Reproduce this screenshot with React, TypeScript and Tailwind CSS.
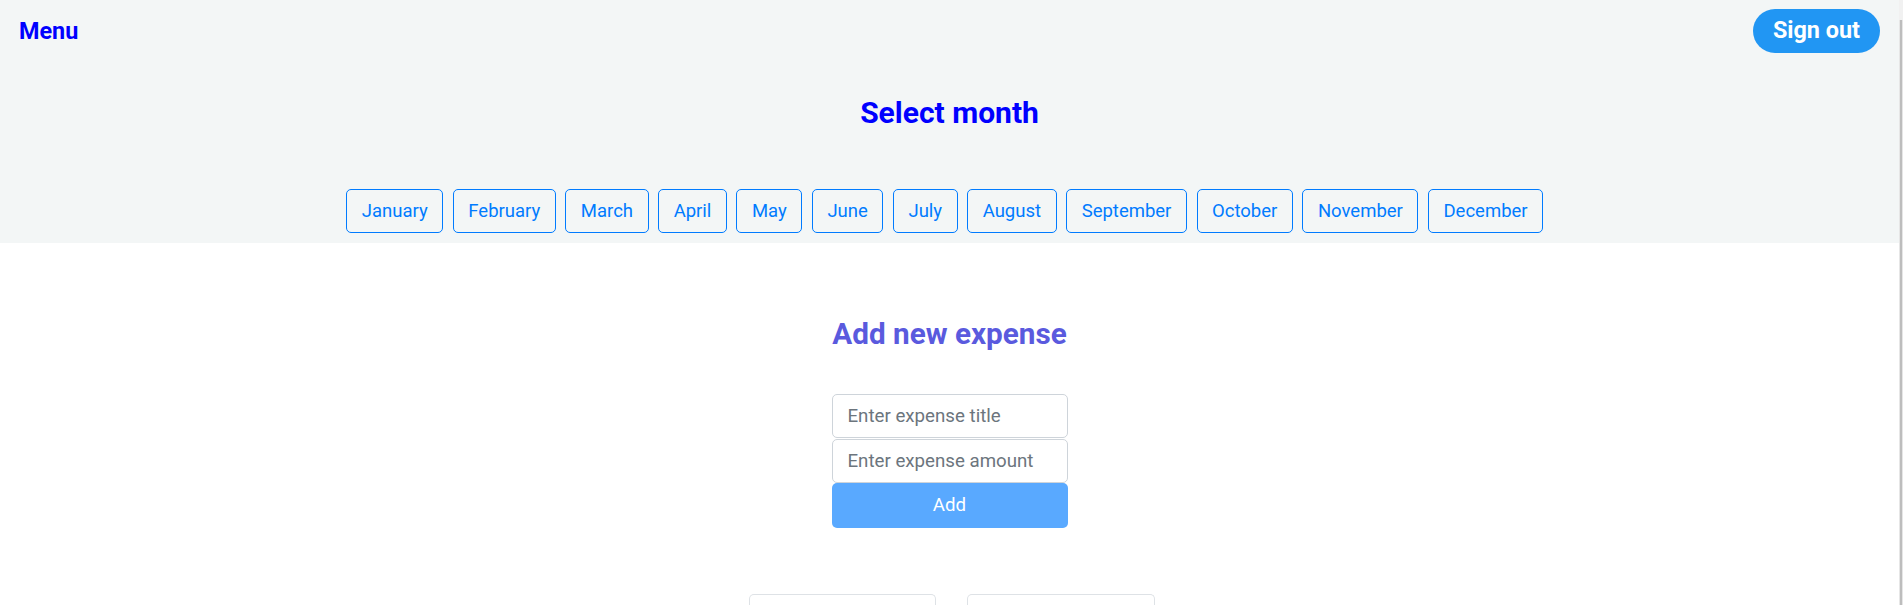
import React from "react";

const months = [
  "January",
  "February",
  "March",
  "April",
  "May",
  "June",
  "July",
  "August",
  "September",
  "October",
  "November",
  "December",
];

function Header() {
  return (
    <header className="bg-[#f3f6f6] pb-[10px]">
      <div className="flex items-center justify-between px-[19px] pt-[9px]">
        <button className="text-[23.4px] font-bold leading-[30px] text-[#0000ff]">
          Menu
        </button>
        <button className="h-[44px] rounded-full bg-[#2196f3] px-[20px] text-[23.4px] font-bold text-white">
          Sign out
        </button>
      </div>
      <h2 className="mt-[42px] text-center text-[30px] font-bold leading-[36px] text-[#0000ff]">
        Select month
      </h2>
      <div className="mt-[58px] flex justify-center">
        {months.map((month) => (
          <button
            key={month}
            className="mr-[9.6px] h-[44px] rounded-[5px] border border-[#007bff] px-[14.5px] text-[18.5px] leading-[28px] text-[#007bff]"
          >
            {month}
          </button>
        ))}
      </div>
    </header>
  );
}

function ExpenseForm() {
  return (
    <section className="flex flex-col items-center">
      <h2 className="mt-[73px] text-[29.7px] font-bold leading-[36px] text-[#5a5ade]">
        Add new expense
      </h2>
      <form className="mt-[42px] flex w-[236px] flex-col">
        <input
          type="text"
          placeholder="Enter expense title"
          className="h-[44px] rounded-[5px] border border-[#ced4da] bg-white px-[15px] text-[18.7px] text-[#495057] outline-none placeholder:text-[#6c757d]"
        />
        <input
          type="number"
          placeholder="Enter expense amount"
          className="mt-px h-[44px] rounded-[5px] border border-[#ced4da] bg-white px-[15px] text-[18.7px] text-[#495057] outline-none placeholder:text-[#6c757d]"
        />
        <button
          type="button"
          disabled
          className="h-[45px] rounded-[5px] bg-[#59a9ff] text-[18.7px] text-white"
        >
          Add
        </button>
      </form>
      <div className="ml-[4px] mt-[66px] flex gap-[31px]">
        <div className="h-[30px] w-[187px] rounded-t-[5px] border border-b-0 border-[#dee2e6]" />
        <div className="h-[30px] w-[188px] rounded-t-[5px] border border-b-0 border-[#dee2e6]" />
      </div>
    </section>
  );
}

export default function App() {
  return (
    <div className="flex h-screen overflow-hidden bg-white font-['Roboto',sans-serif]">
      <div className="min-w-0 flex-1">
        <Header />
        <ExpenseForm />
      </div>
      {/* page scrollbar */}
      <div className="flex w-[4px] flex-col bg-[#f1f1f1]">
        <div className="mt-[20px] flex flex-1 justify-center bg-[#e6e6e6]">
          <div className="w-[2px] bg-[#bdbdbd]" />
        </div>
      </div>
    </div>
  );
}
